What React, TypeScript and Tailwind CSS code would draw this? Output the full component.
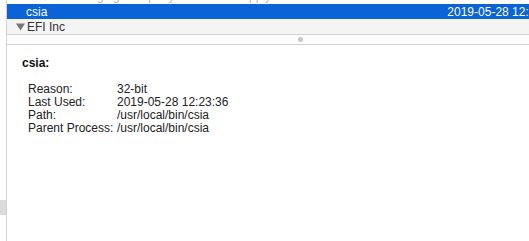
import React from "react";

const details: [string, string][] = [
  ["Reason:", "32-bit"],
  ["Last Used:", "2019-05-28 12:23:36"],
  ["Path:", "/usr/local/bin/csia"],
  ["Parent Process:", "/usr/local/bin/csia"],
];

export default function App() {
  return (
    <div
      className="w-[529px] h-[241px] flex bg-white overflow-hidden text-[#222]"
      style={{ fontFamily: '"Liberation Sans", Arial, sans-serif' }}
    >
      <div className="w-[6px] flex flex-col">
        <div className="mt-[200px] h-[15px] bg-[#dcdcdc]" />
      </div>
      <div className="w-px bg-[#d3d3d3]" />

      <div className="flex-1 flex flex-col min-w-0">
        {/* clipped row above the selection */}
        <div className="h-[4px] overflow-hidden">
          <div className="flex items-center h-[15px] -mt-[12px] text-[12px] text-[#b8b8b8] pl-[70px] gap-[60px] whitespace-nowrap">
            <span>Imaging Company</span>
            <span>Supply Tools</span>
          </div>
        </div>

        {/* selected row */}
        <div className="h-[15px] bg-[#0b63d8] flex items-center text-white text-[12px] whitespace-nowrap">
          <span className="pl-[19px] font-medium">csia</span>
          <span className="ml-[400px]">2019-05-28 12:23:36</span>
        </div>

        {/* group header */}
        <div className="h-[15px] bg-[#f4f4f4] flex items-center text-[12px] text-[#333] border-b border-[#d3d3d3] box-content">
          <svg width="9" height="8" viewBox="0 0 9 8" className="ml-[9px] mr-[2px]">
            <path d="M0 0.5 H9 L4.5 7.5 Z" fill="#777" />
          </svg>
          <span>EFI Inc</span>
        </div>

        {/* splitter */}
        <div className="h-[9px] bg-[#fcfcfc] border-b border-[#d3d3d3] box-content flex items-center">
          <div className="ml-[291px] w-[5px] h-[5px] rounded-full bg-[#c9c9c9]" />
        </div>

        {/* details */}
        <div className="pl-[15px] pt-[11px] text-[12px]">
          <div className="font-bold leading-[14px] text-[#111]">csia:</div>
          <div className="mt-[13px] ml-[6px]">
            {details.map(([k, v]) => (
              <div key={k} className="flex leading-[13px]">
                <span className="w-[89px] shrink-0">{k}</span>
                <span>{v}</span>
              </div>
            ))}
          </div>
        </div>
      </div>
    </div>
  );
}
